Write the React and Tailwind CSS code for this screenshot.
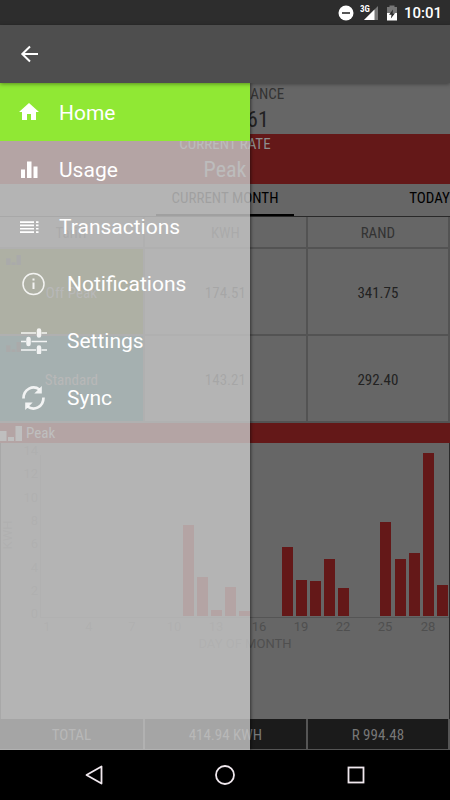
import React from 'react';

const condensed = 'font-["Roboto_Condensed",Roboto,sans-serif]';

const days = [
  [11, 91], [12, 39], [13, 6], [14, 29], [15, 5], [18, 69], [19, 36], [20, 35],
  [21, 57], [22, 28], [25, 94], [26, 57], [27, 63], [28, 163], [29, 31],
];
const dayLabels = [1, 4, 7, 10, 13, 16, 19, 22, 25, 28];
const levels = [14, 12, 10, 8, 6, 4, 2, 0];
const dayX = (day) => Math.round(47 + (day - 1) * 14.1);

function MiniBars({ className }) {
  return (
    <svg className={className} viewBox="0 0 22 15" fill="currentColor" aria-hidden="true">
      <rect x="0" y="5" width="6.5" height="10" />
      <rect x="8" y="11" width="6" height="4" />
      <rect x="15.5" y="0" width="6.5" height="15" />
    </svg>
  );
}

function StatusBar() {
  return (
    <div className="flex h-[25px] shrink-0 items-center justify-end bg-[#2d2d2d] pr-2 text-white">
      <svg className="mr-1.5 h-4 w-4" viewBox="0 0 16 16" aria-hidden="true">
        <circle cx="8" cy="8" r="7.5" fill="#fff" />
        <rect x="4" y="7.2" width="8" height="1.6" fill="#2d2d2d" />
      </svg>
      <svg className="h-4 w-[18px]" viewBox="0 0 18 16" aria-hidden="true">
        <path d="M18 1v14H4z" fill="#777" />
        <path d="M14.500 4.500V15H4z" fill="#fff" />
        <text x="0" y="7" fontSize="9" fontWeight="700" fill="#fff" stroke="#2d2d2d" strokeWidth="2" paintOrder="stroke" fontFamily="Roboto Condensed, Roboto, sans-serif">3G</text>
      </svg>
      <svg className="ml-2 h-4 w-3" viewBox="0 0 12 16" aria-hidden="true">
        <path d="M1 2h2.5V.5h5V2H11v7H1z" fill="#777" />
        <path d="M1 8h10v7.5H1z" fill="#fff" />
        <path d="M7 4.5 3 9.8h2.5l-.6 3.7L9 8.2H6.6z" fill="#2d2d2d" />
      </svg>
      <span className="ml-1.5 text-[15px] leading-6 font-medium">10:01</span>
    </div>
  );
}

function Chart() {
  return (
    <svg className="block w-full" viewBox="0 0 450 276" role="img" aria-label="KWH per day of month" fontFamily="Roboto, sans-serif" fontSize="13" fill="#4f4f4f">
      <path d="M40.5 12V174.500H449" fill="none" stroke="#555" />
      {levels.map((level, i) => (
        <text key={level} x="38" y={12 + Math.round(i * 23.3)} textAnchor="end">{level}</text>
      ))}
      {dayLabels.map((day) => (
        <text key={day} x={dayX(day)} y="188" textAnchor="middle">{day}</text>
      ))}
      <text x="245" y="205" textAnchor="middle">DAY OF MONTH</text>
      <text transform="translate(12 92) rotate(-90)" textAnchor="middle">KWH</text>
      {days.map(([day, height]) => (
        <rect key={day} x={dayX(day) - 5} y={173 - height} width="11" height={height} fill="#641818" />
      ))}
      <path d="M.5 0v276M449.500 0v276" stroke="#2a2a2a" />
    </svg>
  );
}

function Columns() {
  return (
    <colgroup>
      <col className="w-[32.200%]" />
      <col className="w-[36.200%]" />
      <col />
    </colgroup>
  );
}

function Dashboard() {
  return (
    <main className={`${condensed} flex flex-1 flex-col bg-[#666] text-center text-[15px] leading-5`}>
      <section className="h-[51px] pt-px">
        <h2 className="text-[#333]">CURRENT BALANCE</h2>
        <p className="text-[22px] leading-8 text-[#222]">R 1000.61</p>
      </section>
      <section className="h-[50px] bg-[#641818] text-[#8d8d8d]">
        <h2>CURRENT RATE</h2>
        <p className="text-[22px] leading-8">Peak</p>
      </section>
      <div className="grid h-[33px] grid-cols-[1fr_138px_1fr] border-b border-[#292929] text-black">
        <button className="col-start-2 border-b-2 border-black pb-0.5 whitespace-nowrap" type="button">CURRENT MONTH</button>
        <button className="justify-self-end pb-1" type="button">TODAY</button>
      </div>
      <table className="w-full table-fixed border-separate border-spacing-0 text-[#222] [&_td]:border-r-2 [&_td]:border-b-2 [&_td]:border-[#535353] [&_td]:pt-0.5 [&_th]:border-r-2 [&_th]:border-b-2 [&_th]:border-[#535353] [&_th]:pt-0.5 [&_th]:font-normal">
        <Columns />
        <thead>
          <tr className="h-8 text-[#333]"><th>Tariff</th><th>KWH</th><th>RAND</th></tr>
        </thead>
        <tbody>
          <tr className="h-[87px]">
            <th className="relative bg-[#455016] text-[#777]">
              <MiniBars className="absolute top-1.5 left-1.5 h-2.5 w-[15px] text-[#333]" />
              Off Peak
            </th>
            <td>174.51</td><td>341.75</td>
          </tr>
          <tr className="h-[87px]">
            <th className="relative bg-[#1c5050] text-[#777]">
              <MiniBars className="absolute top-1.5 left-1.5 h-2.5 w-[15px] text-[#333]" />
              Standard
            </th>
            <td>143.21</td><td>292.40</td>
          </tr>
        </tbody>
      </table>
      <div className="flex h-5 items-center gap-1 bg-[#641818] text-[#999]">
        <MiniBars className="h-[15px] w-[22px]" />
        Peak
      </div>
      <div className="flex-1"><Chart /></div>
      <table className="w-full table-fixed border-separate border-spacing-0 bg-[#1b1b1b] text-[#777] [&_td]:border-r-2 [&_td]:border-b [&_td]:border-[#555] [&_td]:pt-0.5">
        <Columns />
        <tbody>
          <tr className="h-[31px]"><td>TOTAL</td><td>414.94 KWH</td><td>R 994.48</td></tr>
        </tbody>
      </table>
    </main>
  );
}

const icons = {
  home: <path d="M10 1 0 10h3v8h5v-6h4v6h5v-8h3z" fill="currentColor" />,
  usage: <path d="M2 9.500h4V18H2zM8 1.500h4.500V18H8zM14.500 6.500h4V18h-4z" fill="currentColor" />,
  list: <path d="M1 4.300h14v1.700H1zM1 7.600h14v1.700H1zM1 10.900h14v1.700H1zM1 14.200h14v1.700H1zM17 4.300h2.500v1.700H17zM17 7.600h2.500v1.700H17zM17 10.900h2.500v1.700H17zM17 14.200h2.500v1.700H17z" fill="currentColor" />,
  info: (
    <g fill="none" stroke="currentColor">
      <circle cx="12.500" cy="13" r="10.500" strokeWidth="1.500" />
      <path d="M12.500 11.500v6.500" strokeWidth="2" />
      <path d="M12.500 7.500v2" strokeWidth="2" />
    </g>
  ),
  sliders: (
    <g fill="none" stroke="currentColor">
      <path d="M0 5h15M20.500 5H26M0 13.500h5M10.500 13.500H26M0 22h15M20.500 22H26" strokeWidth="1.700" />
      <path d="M18 2.500v5M7.500 11v5M18 19.500v5" strokeWidth="4.500" strokeLinecap="round" />
    </g>
  ),
  sync: (
    <g fill="none" stroke="currentColor" strokeWidth="2.700">
      <path d="M2.500 13.500C2.500 4 12 -.3 18.500 4.500" />
      <path d="M22.500 12.500C22.500 22 13 26.300 6.500 21.500" />
      <path d="M20.800 1v7.500h-7.500zM4.200 25v-7.500h7.500z" fill="currentColor" stroke="none" />
    </g>
  ),
};

const menu = [
  ['Home', 'home'], ['Usage', 'usage'], ['Transactions', 'list'],
  ['Notifications', 'info'], ['Settings', 'sliders'], ['Sync', 'sync'],
];

function Drawer() {
  return (
    <nav className="absolute inset-y-0 left-0 w-[250px] bg-[#c8c8c8]/80 text-[21px] leading-6 text-white shadow-[1px_0_3px_rgba(0,0,0,0.5)]">
      {menu.map(([label, icon], i) => (
        <a
          key={label}
          href="#"
          className={`flex items-center gap-5 ${i === 0 ? 'h-[58px] bg-[#90e834]' : 'h-[57px]'} ${i < 3 ? 'pl-[19px]' : 'pl-[21px]'}`}
        >
          <svg
            className={i < 3 ? 'h-5 w-5' : 'h-[26px] w-[26px] text-white/85'}
            viewBox={i < 3 ? '0 0 20 20' : '0 0 26 26'}
            aria-hidden="true"
          >
            {icons[icon]}
          </svg>
          <span className="pt-px">{label}</span>
        </a>
      ))}
    </nav>
  );
}

function NavigationBar() {
  return (
    <div className="grid h-[50px] shrink-0 grid-cols-3 items-center justify-items-center bg-black px-7 text-[#f0e8ee]">
      <button type="button" aria-label="Back">
        <svg className="h-5 w-5" viewBox="0 0 20 20" fill="none" stroke="currentColor" strokeWidth="1.800" strokeLinejoin="round"><path d="M17.500 1.500v17L2.500 10z" /></svg>
      </button>
      <button type="button" aria-label="Home screen">
        <svg className="h-5 w-5" viewBox="0 0 20 20" fill="none" stroke="currentColor" strokeWidth="1.800"><circle cx="10" cy="10" r="9" /></svg>
      </button>
      <button type="button" aria-label="Recent apps">
        <svg className="h-5 w-5" viewBox="0 0 20 20" fill="none" stroke="currentColor" strokeWidth="1.800"><rect x="2.500" y="2.500" width="15" height="15" /></svg>
      </button>
    </div>
  );
}

export default function App() {
  return (
    <div className="flex min-h-screen flex-col font-[Roboto,sans-serif]">
      <StatusBar />
      <header className="relative z-10 flex h-[58px] shrink-0 items-center bg-[#4e4e4e] pl-5 shadow-[0_1px_4px_rgba(0,0,0,0.4)]">
        <button type="button" aria-label="Close menu">
          <svg className="h-[18px] w-[18px] text-white" viewBox="0 0 18 18" fill="none" stroke="currentColor" strokeWidth="2"><path d="M18 9H2M10 1.500 2.300 9 10 16.500" /></svg>
        </button>
      </header>
      <div className="relative flex flex-1 flex-col">
        <Dashboard />
        <Drawer />
      </div>
      <NavigationBar />
    </div>
  );
}
